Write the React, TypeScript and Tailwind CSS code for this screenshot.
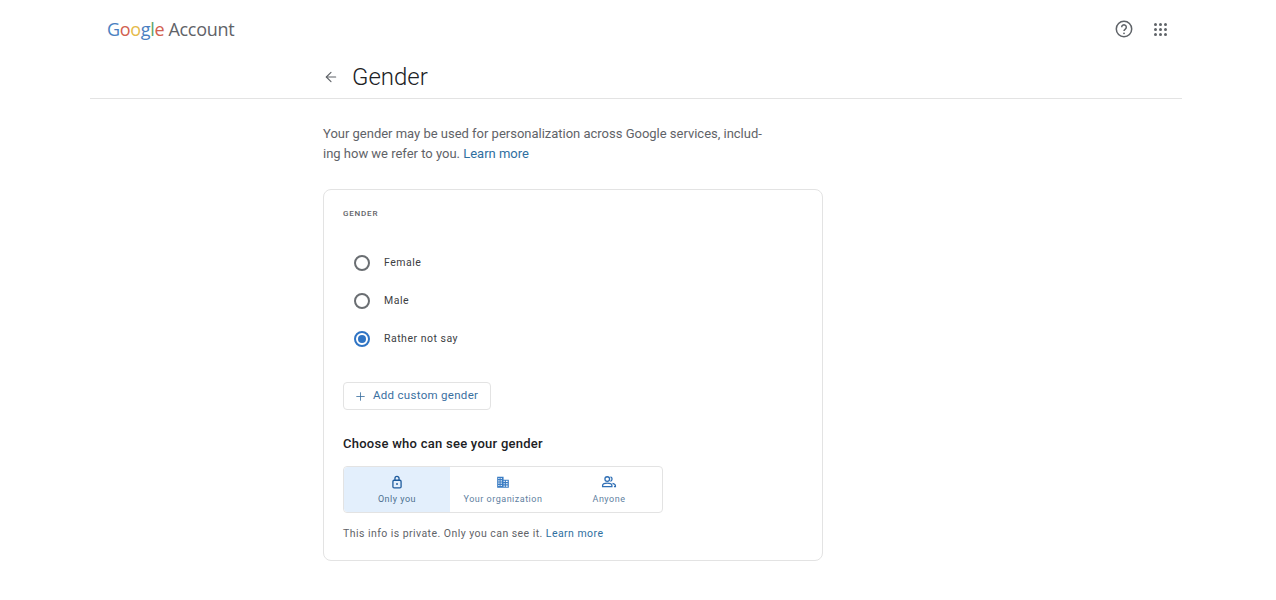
import React from 'react';
import { ArrowLeft, Plus } from 'lucide-react';

const genderOptions = [
  { label: 'Female', checked: false },
  { label: 'Male', checked: false },
  { label: 'Rather not say', checked: true },
];

const LockIcon = () => (
  <svg width="14" height="14" viewBox="0 0 24 24" fill="none" stroke="#1c5a9c" strokeWidth="2.2">
    <rect x="5" y="9" width="14" height="13" rx="2" />
    <path d="M8.5 9V6a3.5 3.5 0 0 1 7 0v3" />
    <circle cx="12" cy="15.5" r="1.6" fill="#1c5a9c" stroke="none" />
  </svg>
);

const BuildingIcon = () => (
  <svg width="14" height="14" viewBox="0 0 24 24" fill="#3b7dc4">
    <path d="M2 3h11v5h9v14H2V3zm2 2v2h2V5H4zm4 0v2h2V5H8zM4 9v2h2V9H4zm4 0v2h2V9H8zm-4 4v2h2v-2H4zm4 0v2h2v-2H8zm-4 4v2h2v-2H4zm4 0v2h2v-2H8zm5-7v2h2v-2h-2zm0 4v2h2v-2h-2zm0 4v2h2v-2h-2zm4-8v2h3v-2h-3zm0 4v2h3v-2h-3zm0 4v2h3v-2h-3z" />
  </svg>
);

const PeopleIcon = () => (
  <svg width="16" height="14" viewBox="0 0 26 24" fill="none" stroke="#2f6fb5" strokeWidth="2.2">
    <circle cx="10" cy="7" r="4" />
    <path d="M2 20v-1.5C2 15.5 6 14 10 14s8 1.500 8 4.500V20H2z" />
    <path d="M15.500 3.200a4 4 0 0 1 0 7.600" />
    <path d="M19 14.300c2.800.6 5 2 5 4.200V20h-2.500" />
  </svg>
);

const visibilityOptions = [
  { label: 'Only you', icon: <LockIcon />, active: true },
  { label: 'Your organization', icon: <BuildingIcon />, active: false },
  { label: 'Anyone', icon: <PeopleIcon />, active: false },
];

const Radio = ({ checked }: { checked: boolean }) =>
  checked ? (
    <span className="flex h-4 w-4 items-center justify-center rounded-full border-2 border-[#2f74c4]">
      <span className="h-2 w-2 rounded-full bg-[#2f74c4]" />
    </span>
  ) : (
    <span className="h-4 w-4 rounded-full border-2 border-[#6a6e72]" />
  );

export default function App() {
  return (
    <div className="h-[600px] overflow-hidden bg-white font-['Roboto',sans-serif] text-[#3c4043]">
      <header className="ml-[90px] h-[99px] w-[1092px] border-b border-[#e3e3e3]">
        <div className="flex h-[58px] items-center justify-between pl-[17px] pr-[15px]">
          <div className="flex items-baseline font-['Open_Sans',sans-serif] text-[18px] tracking-[-0.3px]">
            <span className="font-medium text-[#4a7fc1]">G</span>
            <span className="font-medium text-[#d2604f]">o</span>
            <span className="font-medium text-[#e5bb4b]">o</span>
            <span className="font-medium text-[#4a7fc1]">g</span>
            <span className="font-medium text-[#5ba56b]">l</span>
            <span className="font-medium text-[#d2604f]">e</span>
            <span className="ml-[4px] tracking-[-0.3px] text-[#5f6368]">Account</span>
          </div>
          <div className="flex items-center gap-[21px]">
            <svg width="18" height="18" viewBox="0 0 18 18" fill="none" stroke="#5f6368" strokeWidth="1.500">
              <circle cx="9" cy="9" r="7.700" />
              <path d="M6.700 7.200a2.300 2.300 0 1 1 3.600 1.900c-.8.600-1.300 1-1.300 2" />
              <circle cx="9" cy="13.300" r=".9" fill="#5f6368" stroke="none" />
            </svg>
            <div className="grid grid-cols-3 gap-[2px]">
              {Array.from({ length: 9 }).map((_, i) => (
                <span key={i} className="h-[3px] w-[3px] rounded-full bg-[#5f6368]" />
              ))}
            </div>
          </div>
        </div>
        <div className="ml-[233px] flex items-center gap-[13px]">
          <ArrowLeft size={16} strokeWidth={1.700} className="text-[#5f6368]" />
          <h1 className="text-[24px] font-light leading-[38px] text-[#202124]">Gender</h1>
        </div>
      </header>

      <main className="ml-[323px] w-[500px]">
        <p className="mt-[25px] w-[450px] text-[13px] leading-[19.500px] tracking-[-0.01px] text-[#5f6368]">
          Your gender may be used for personalization across Google services, includ-
          <br />
          ing how we refer to you. <span className="text-[#2f6f9f]">Learn more</span>
        </p>

        <section className="mt-[26px] h-[372px] rounded-lg border border-[#e3e3e3] px-[19px]">
          <h2 className="mt-[18px] text-[8px] font-medium leading-[12px] tracking-[0.8px] text-[#5f6368]">GENDER</h2>

          <div className="ml-[11px] mt-[35px] flex flex-col gap-[22px]">
            {genderOptions.map((option) => (
              <label key={option.label} className="flex h-4 items-center gap-[14px] text-[10.500px] tracking-[0.5px] text-[#3c4043]">
                <Radio checked={option.checked} />
                {option.label}
              </label>
            ))}
          </div>

          <button className="mt-[35px] flex h-[28px] w-[148px] items-center gap-[6px] rounded border border-[#e3e3e3] pl-[10px] text-[11.500px] font-normal tracking-[0.3px] text-[#3a6f9f]">
            <Plus size={13} strokeWidth={1.500} />
            Add custom gender
          </button>

          <h3 className="mt-[25px] text-[13px] font-medium leading-[18px] tracking-[0.26px] text-[#202124]">Choose who can see your gender</h3>

          <div className="mt-[13px] flex h-[47px] w-[320px] rounded border border-[#e3e3e3]">
            {visibilityOptions.map((option) => (
              <div
                key={option.label}
                className={`flex flex-1 flex-col items-center justify-center gap-[4px] text-[9px] tracking-[0.5px] ${
                  option.active ? 'rounded-l bg-[#e3effc] text-[#4d6f8f]' : 'text-[#5f7f9f]'
                }`}
              >
                {option.icon}
                <span className="leading-[12px]">{option.label}</span>
              </div>
            ))}
          </div>

          <p className="mt-[14px] text-[10.500px] leading-[14px] tracking-[0.45px] text-[#5f6368]">
            This info is private. Only you can see it. <span className="text-[#2f6f9f]">Learn more</span>
          </p>
        </section>
      </main>
    </div>
  );
}
